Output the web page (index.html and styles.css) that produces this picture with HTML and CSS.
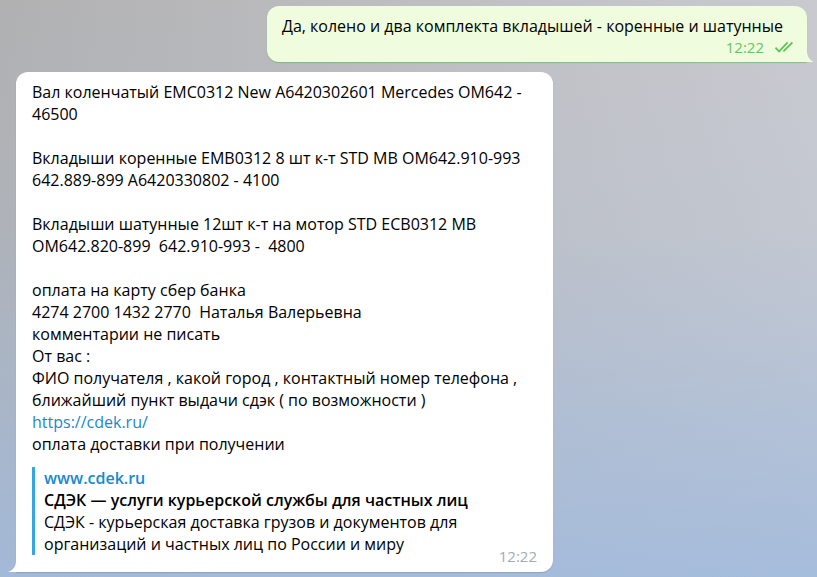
FILE: index.html
```html
<!DOCTYPE html>
<html lang="ru">
<head>
    <meta charset="UTF-8">
    <meta name="viewport" content="width=device-width, initial-scale=1.0">
    <title>Чат</title>
    <link rel="stylesheet" href="styles.css">
</head>
<body>
    <div id="chat">
        <!-- Outgoing message -->
        <div class="msg msg-out">
            <div class="bubble bubble-out">
                <div class="text">Да, колено и два комплекта вкладышей - коренные и шатунные</div>
                <div class="meta">
                    <span class="time">12:22</span>
                    <svg class="checks" width="22" height="12" viewBox="0 0 22 12">
                        <path d="M1.5 6.6l3.6 3.8L13.6 1.3M9.4 10.4L18.4 1.3" fill="none" stroke="#5dc452" stroke-width="1.7"/>
                    </svg>
                </div>
                <svg class="tail tail-out" width="7" height="11" viewBox="0 0 7 11">
                    <path d="M0 0C0 5 2.5 9 7 11H0Z" fill="#effdde"/>
                </svg>
            </div>
        </div>

        <!-- Incoming message -->
        <div class="msg msg-in">
            <div class="bubble bubble-in">
                <div class="text">Вал коленчатый EMC0312 New A6420302601 Mercedes OM642 -<br>46500<br><br>Вкладыши коренные EMB0312 8 шт к-т STD MB OM642.910-993<br>642.889-899 A6420330802 - 4100<br><br>Вкладыши шатунные 12шт к-т на мотор STD ECB0312 MB<br>OM642.820-899&nbsp; 642.910-993 -&nbsp; 4800<br><br>оплата на карту сбер банка<br>4274 2700 1432 2770&nbsp; Наталья Валерьевна<br>комментарии не писать<br>От вас :<br>ФИО получателя , какой город , контактный номер телефона ,<br>ближайший пункт выдачи сдэк ( по возможности )<br><a class="link" href="#">https://cdek.ru/</a><br>оплата доставки при получении</div>
                <div class="preview">
                    <div class="site">www.cdek.ru</div>
                    <div class="title">СДЭК — услуги курьерской службы для частных лиц</div>
                    <div class="desc">СДЭК - курьерская доставка грузов и документов для<br>организаций и частных лиц по России и миру</div>
                </div>
                <div class="meta meta-in">
                    <span class="time">12:22</span>
                </div>
                <svg class="tail tail-in" width="8" height="11" viewBox="0 0 8 11">
                    <path d="M8 0C8 5 5.5 9 0 11H8Z" fill="#ffffff"/>
                </svg>
            </div>
        </div>
    </div>
</body>
</html>
```

FILE: styles.css
```css
/* General Styles */
* {
    margin: 0;
    padding: 0;
    box-sizing: border-box;
}

body {
    font-family: "Open Sans", "Noto Sans", sans-serif;
    font-size: 16px;
    line-height: 22px;
    color: #000;
    height: 577px;
    overflow: hidden;
    background:
        linear-gradient(to bottom, rgba(160, 186, 222, 0) 0%, rgba(160, 186, 222, 0.15) 40%, rgba(160, 186, 222, 0.85) 100%),
        linear-gradient(to right, #b1b1b2 0%, #bdbdc0 45%, #c9cacf 100%);
}

#chat {
    display: flex;
    flex-direction: column;
    gap: 10px;
    padding: 6px 10px 0 16px;
}

.msg {
    display: flex;
}

.msg-out {
    justify-content: flex-end;
}

.bubble {
    position: relative;
    border-radius: 12px;
}

/* Outgoing bubble */
.bubble-out {
    background-color: #effdde;
    border-bottom-right-radius: 0;
    padding: 9px 11px 5px 15px;
    box-shadow: 0 1px 1px rgba(99, 178, 86, 0.6);
}

.bubble-out .text {
    padding-right: 13px;
}

/* Incoming bubble */
.bubble-in {
    background-color: #fff;
    border-bottom-left-radius: 0;
    width: 537px;
    padding: 9px 16px 6px 16px;
    box-shadow: 0 1px 1px rgba(110, 120, 140, 0.35);
}

.text {
    white-space: nowrap;
}

.link {
    color: #168acd;
    text-decoration: none;
}

/* Link preview */
.preview {
    margin-top: 12px;
    border-left: 3px solid #37a4e3;
    padding-left: 9px;
    white-space: nowrap;
}

.site {
    color: #168acd;
    font-weight: 600;
}

.title {
    font-weight: 600;
}

/* Time and checks */
.meta {
    display: flex;
    justify-content: flex-end;
    align-items: center;
    gap: 10px;
    font-size: 15px;
    line-height: 20px;
}

.bubble-out .time {
    color: #6cc264;
}

.meta-in {
    margin-top: -9px;
}

.meta-in .time {
    color: #a0acb6;
}

.checks {
    display: block;
}

/* Bubble tails */
.tail {
    position: absolute;
    bottom: 0;
}

.tail-out {
    right: -7px;
}

.tail-in {
    left: -8px;
}
```
